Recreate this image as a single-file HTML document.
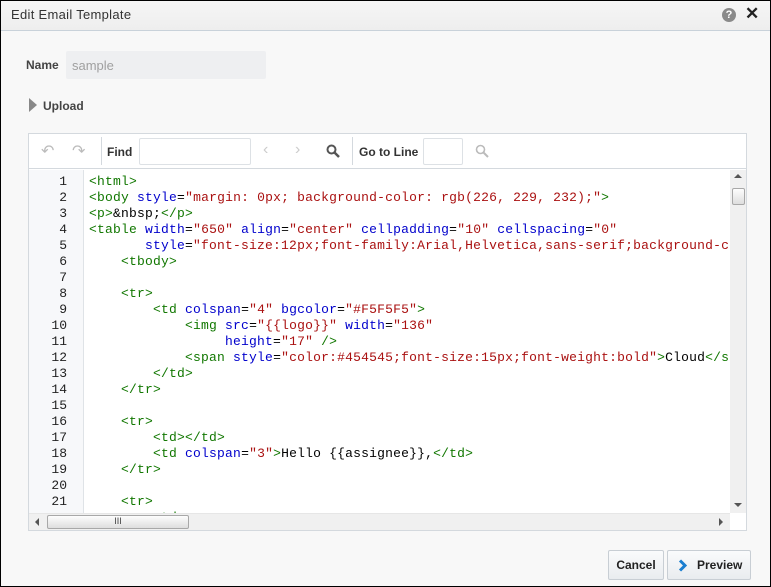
<!DOCTYPE html>
<html><head><meta charset="utf-8"><style>
*{box-sizing:border-box;margin:0;padding:0}
body{width:771px;height:587px;overflow:hidden;font-family:"Liberation Sans",Arial,sans-serif;background:#f8f8f8}
.dlg{position:absolute;left:0;top:0;width:771px;height:587px;background:#f8f8f8}
.frame{position:absolute;left:0;top:0;width:771px;height:587px;border:1px solid #000;z-index:10}
.hdr{position:absolute;left:0;top:0;width:771px;height:31px;background:linear-gradient(#f6f6f6,#eeeeee);border-bottom:1px solid #c9d2da}
.hdr .t{position:absolute;left:11px;top:7px;font-size:13px;color:#333;letter-spacing:.3px}
.help{position:absolute;left:722px;top:8px;width:14px;height:14px;border-radius:50%;background:#8a8a8a;color:#fff;font-size:11px;font-weight:bold;text-align:center;line-height:14px}
.x{position:absolute;left:745px;top:4px;font-size:17px;font-weight:bold;color:#222}
.lbl{position:absolute;font-size:12px;font-weight:bold;color:#444}
.name{position:absolute;left:66px;top:51px;width:200px;height:28px;background:#eeeff1;border-radius:2px;color:#a0a0a0;font-size:13px;padding:7px 6px}
.tri{position:absolute;left:29px;top:98px;width:0;height:0;border-top:7px solid transparent;border-bottom:7px solid transparent;border-left:8px solid #888}
.ed{position:absolute;left:28px;top:133px;width:719px;height:398px;border:1px solid #d4d9de;background:#fff}
.tb{position:absolute;left:0;top:0;width:717px;height:35px;border-bottom:1px solid #d4d9de;background:#fff}
.sep{position:absolute;top:3px;width:1px;height:28px;background:#d4d9de}
.in{position:absolute;top:4px;height:27px;border:1px solid #dde1e5;border-radius:2px;background:#fff}
.tbt{position:absolute;top:11px;font-size:12px;font-weight:bold;color:#333}
.ic{position:absolute;top:7px;color:#bbb;font-size:16px}
.gut{position:absolute;left:0;top:36px;width:55px;height:343px;background:#f7f8fa;border-right:1px solid #dfe3e7}
.ln{position:absolute;left:0;top:40px;width:38px;text-align:right;font:13px/16px "Liberation Mono",monospace;color:#222}
.code{position:absolute;left:60px;top:40px;width:641px;height:339px;overflow:hidden;font:13px/16px "Liberation Mono",monospace;letter-spacing:.2px;white-space:pre;color:#000}
.g{color:#170}.a{color:#00c}.s{color:#a11}
.vs{position:absolute;left:701px;top:36px;width:16px;height:343px;background:#f0f0f0}
.hs{position:absolute;left:0;top:379px;width:701px;height:17px;background:#f0f0f0;border-top:1px solid #e6e6e6}
.thumb{position:absolute;background:linear-gradient(#fdfdfd,#dedede);border:1px solid #a8a8a8;border-radius:2px}
.btn{position:absolute;top:550px;height:30px;border:1px solid #c8ced4;border-radius:2px;background:linear-gradient(#fafbfc,#e9ecef);font-size:12px;font-weight:bold;color:#222;line-height:28px}
</style></head><body>
<div class="dlg">
<div class="hdr"><div class="t">Edit Email Template</div><div class="help">?</div><div class="x">✕</div></div>
<div class="lbl" style="left:26px;top:58px">Name</div>
<div class="name">sample</div>
<div class="tri"></div>
<div class="lbl" style="left:43px;top:99px">Upload</div>
<div class="ed">
 <div class="tb">
  <div class="ic" style="left:12px">↶</div><div class="ic" style="left:43px">↷</div>
  <div class="sep" style="left:72px"></div>
  <div class="tbt" style="left:78px">Find</div>
  <div class="in" style="left:110px;width:112px"></div>
  <div class="ic" style="left:234px;color:#ccc">‹</div><div class="ic" style="left:266px;color:#ccc">›</div>
  <svg style="position:absolute;left:297px;top:10px" width="14" height="14" viewBox="0 0 14 14"><circle cx="5.5" cy="5.5" r="4" fill="none" stroke="#555" stroke-width="2"/><path d="M8.5 8.5L13 13" stroke="#555" stroke-width="2.5"/></svg>
  <div class="sep" style="left:323px"></div>
  <div class="tbt" style="left:330px">Go to Line</div>
  <div class="in" style="left:394px;width:40px"></div>
  <svg style="position:absolute;left:446px;top:10px" width="14" height="14" viewBox="0 0 14 14"><circle cx="5.5" cy="5.5" r="4" fill="none" stroke="#bbb" stroke-width="1.6"/><path d="M8.5 8.5L13 13" stroke="#bbb" stroke-width="2"/></svg>
 </div>
 <div class="gut"></div>
 <div class="ln">1<br>2<br>3<br>4<br>5<br>6<br>7<br>8<br>9<br>10<br>11<br>12<br>13<br>14<br>15<br>16<br>17<br>18<br>19<br>20<br>21</div>
<div class="code"><span class="g">&lt;html&gt;</span>
<span class="g">&lt;body</span> <span class="a">style</span>=<span class="s">"margin: 0px; background-color: rgb(226, 229, 232);"</span><span class="g">&gt;</span>
<span class="g">&lt;p&gt;</span>&amp;nbsp;<span class="g">&lt;/p&gt;</span>
<span class="g">&lt;table</span> <span class="a">width</span>=<span class="s">"650"</span> <span class="a">align</span>=<span class="s">"center"</span> <span class="a">cellpadding</span>=<span class="s">"10"</span> <span class="a">cellspacing</span>=<span class="s">"0"</span>
       <span class="a">style</span>=<span class="s">"font-size:12px;font-family:Arial,Helvetica,sans-serif;background-color:#fff"</span>
    <span class="g">&lt;tbody&gt;</span>

    <span class="g">&lt;tr&gt;</span>
        <span class="g">&lt;td</span> <span class="a">colspan</span>=<span class="s">"4"</span> <span class="a">bgcolor</span>=<span class="s">"#F5F5F5"</span><span class="g">&gt;</span>
            <span class="g">&lt;img</span> <span class="a">src</span>=<span class="s">"{{logo}}"</span> <span class="a">width</span>=<span class="s">"136"</span>
                 <span class="a">height</span>=<span class="s">"17"</span> <span class="g">/&gt;</span>
            <span class="g">&lt;span</span> <span class="a">style</span>=<span class="s">"color:#454545;font-size:15px;font-weight:bold"</span><span class="g">&gt;</span>Cloud<span class="g">&lt;/span&gt;</span>
        <span class="g">&lt;/td&gt;</span>
    <span class="g">&lt;/tr&gt;</span>

    <span class="g">&lt;tr&gt;</span>
        <span class="g">&lt;td&gt;&lt;/td&gt;</span>
        <span class="g">&lt;td</span> <span class="a">colspan</span>=<span class="s">"3"</span><span class="g">&gt;</span>Hello {{assignee}},<span class="g">&lt;/td&gt;</span>
    <span class="g">&lt;/tr&gt;</span>

    <span class="g">&lt;tr&gt;</span>
        <span class="g">&lt;td&gt;</span></div>
 <div class="vs">
  <div style="position:absolute;left:4px;top:4px;border-left:4px solid transparent;border-right:4px solid transparent;border-bottom:4px solid #555"></div>
  <div class="thumb" style="left:2px;top:18px;width:13px;height:17px"></div>
  <div style="position:absolute;left:4px;top:333px;border-left:4px solid transparent;border-right:4px solid transparent;border-top:4px solid #555"></div>
 </div>
 <div class="hs">
  <div style="position:absolute;left:6px;top:4px;border-top:4px solid transparent;border-bottom:4px solid transparent;border-right:4px solid #555"></div>
  <div class="thumb" style="left:18px;top:1px;width:142px;height:14px;text-align:center;font-size:9px;line-height:11px;color:#444">III</div>
  <div style="position:absolute;left:690px;top:4px;border-top:4px solid transparent;border-bottom:4px solid transparent;border-left:4px solid #555"></div>
 </div>
</div>
<div class="btn" style="left:608px;width:56px;text-align:center">Cancel</div>
<div class="btn" style="left:667px;width:84px"><svg style="position:absolute;left:10px;top:8px" width="10" height="13" viewBox="0 0 10 13"><path d="M2 1.5L7 6.5L2 11.5" fill="none" stroke="#1a7ed0" stroke-width="3"/></svg><span style="position:absolute;left:29px">Preview</span></div>
</div>
<div class="frame"></div>
</body></html>
